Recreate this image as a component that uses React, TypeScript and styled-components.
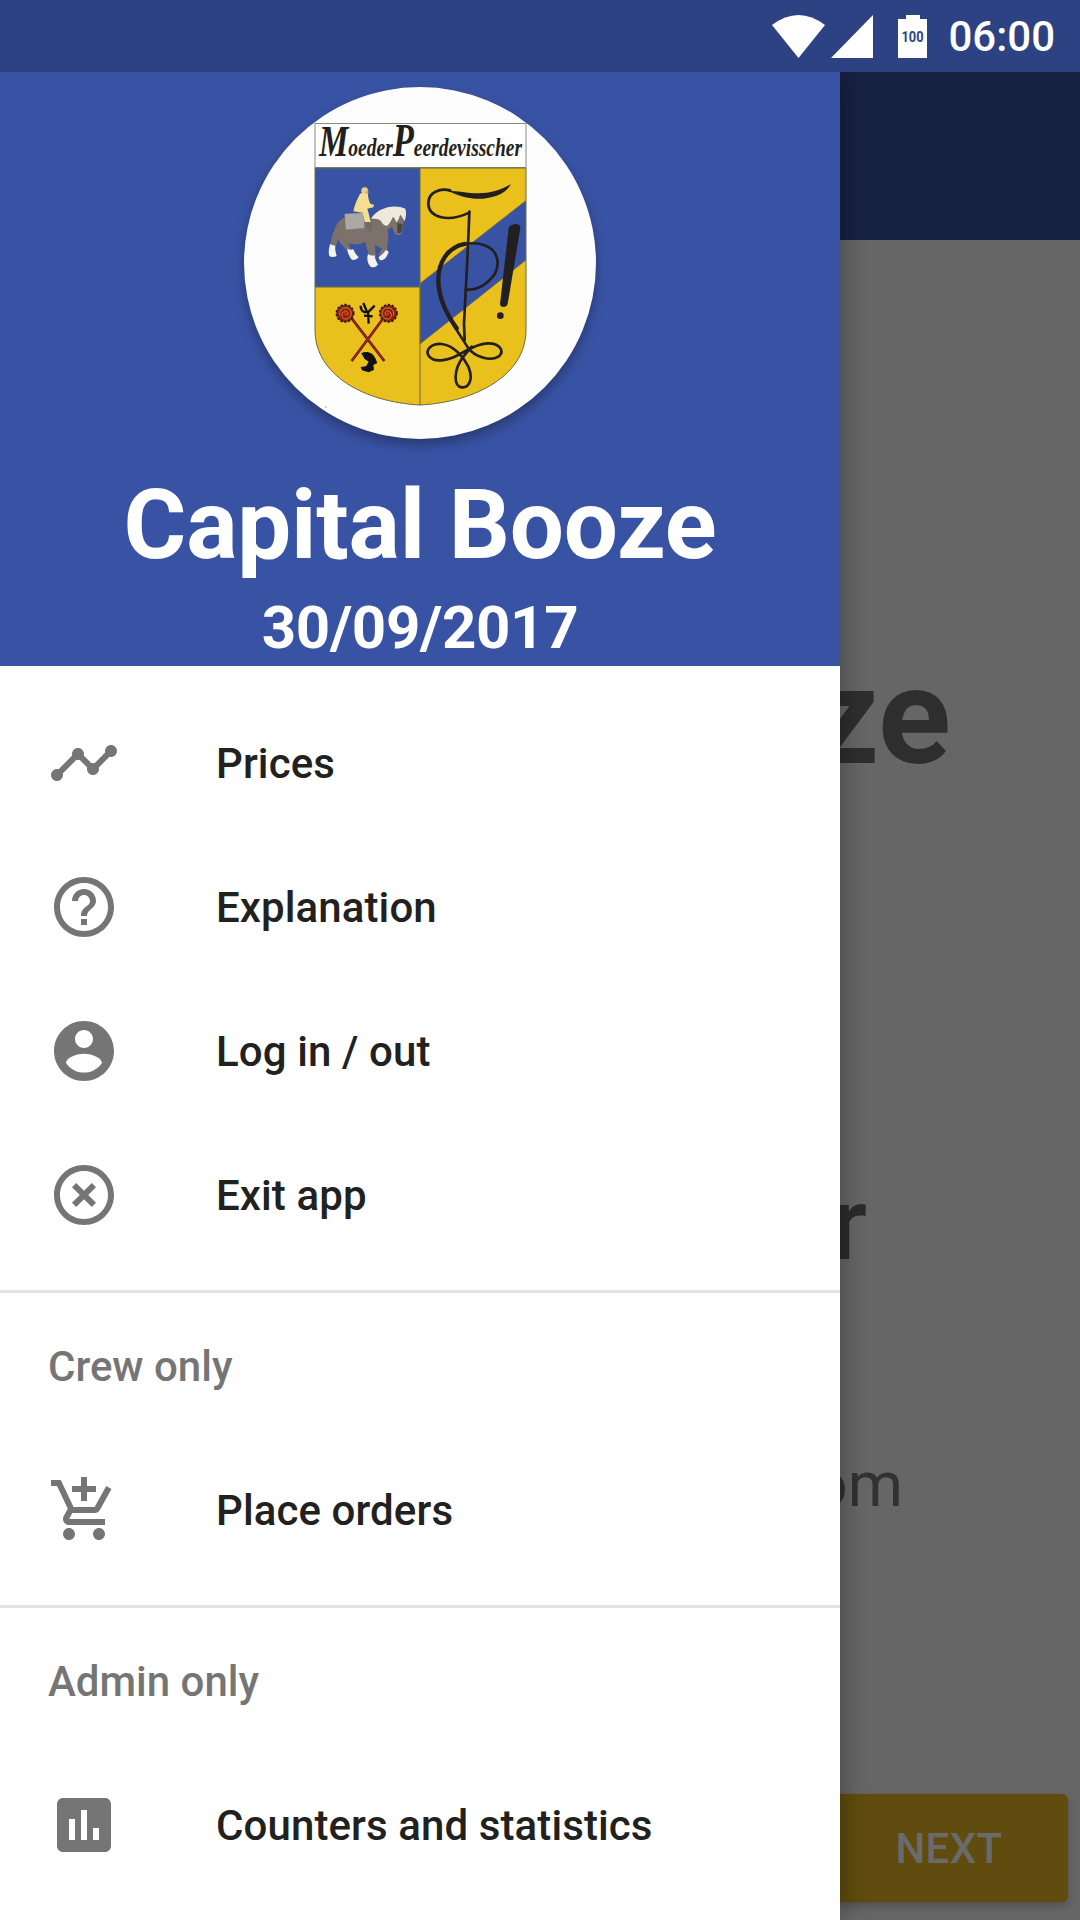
import React from 'react';
import styled, { createGlobalStyle } from 'styled-components';

const GlobalStyle = createGlobalStyle`
  html, body {
    margin: 0;
    padding: 0;
    background: #666666;
  }
  body {
    font-family: Roboto, "Liberation Sans", sans-serif;
    overflow: hidden;
  }
`;

const Screen = styled.div`
  width: 1080px;
  height: 1920px;
  display: flex;
  flex-direction: column;
  overflow: hidden;
`;

const StatusBar = styled.div`
  height: 72px;
  flex: none;
  display: flex;
  align-items: center;
  justify-content: flex-end;
  padding-right: 25px;
  background: #2d4282;
  position: relative;
  z-index: 3;
`;

const StatusIcon = styled.svg<{ $left: number }>`
  display: block;
  margin-left: ${(p) => p.$left}px;
  fill: #ffffff;
`;

const Clock = styled.span`
  margin-left: 21px;
  font-size: 42px;
  font-weight: 500;
  color: #ffffff;
`;

const Stage = styled.div`
  flex: 1;
  display: flex;
  min-height: 0;
`;

const Drawer = styled.nav`
  width: 840px;
  flex: none;
  background: #ffffff;
  box-shadow: 4px 0 22px rgba(0, 0, 0, 0.28);
  position: relative;
  z-index: 2;
`;

const DrawerHeader = styled.header`
  height: 594px;
  box-sizing: border-box;
  padding-top: 15px;
  display: flex;
  flex-direction: column;
  align-items: center;
  background: #3953a4;
  color: #ffffff;
  overflow: hidden;
`;

const Crest = styled.div`
  width: 352px;
  height: 352px;
  flex: none;
  border-radius: 50%;
  background: #fdfdfd;
  box-shadow: 0 6px 12px rgba(0, 0, 0, 0.3);
  svg {
    display: block;
  }
`;

const AppName = styled.h1`
  margin: 30px 0 0;
  font-size: 96px;
  line-height: 112px;
  font-weight: 700;
  letter-spacing: -0.2px;
`;

const EventDate = styled.div`
  margin-top: 12px;
  font-size: 60px;
  line-height: 70px;
  font-weight: 700;
  letter-spacing: -0.35px;
`;

const Section = styled.section<{ $divider?: boolean }>`
  padding: 1px 0 23px;
  border-bottom: ${(p) => (p.$divider ? '3px solid #e3e3e3' : 'none')};
`;

const FirstSection = styled(Section)`
  padding-top: 25px;
`;

const SectionLabel = styled.div`
  height: 144px;
  display: flex;
  align-items: center;
  padding-left: 48px;
  font-size: 42px;
  font-weight: 500;
  color: #757575;
`;

const Row = styled.div`
  height: 144px;
  display: flex;
  align-items: center;
  padding-left: 48px;
  font-size: 42px;
  font-weight: 500;
  letter-spacing: 0.1px;
  color: #212121;
`;

const RowIcon = styled.svg`
  width: 72px;
  height: 72px;
  flex: none;
  margin-right: 96px;
  fill: #757575;
`;

const Behind = styled.div`
  flex: 1;
  min-width: 0;
  display: flex;
  flex-direction: column;
  overflow: hidden;
`;

const Toolbar = styled.div`
  height: 168px;
  flex: none;
  background: #172142;
  box-shadow: 0 3px 8px rgba(0, 0, 0, 0.2);
`;

const BehindBody = styled.div`
  flex: 1;
  display: flex;
  flex-direction: column;
  background: #666666;
`;

const BehindLine = styled.div<{ $size: number; $weight: number; $top: number; $right: number; $color: string }>`
  display: flex;
  justify-content: flex-end;
  white-space: nowrap;
  margin-top: ${(p) => p.$top}px;
  padding-right: ${(p) => p.$right}px;
  font-size: ${(p) => p.$size}px;
  line-height: ${(p) => Math.round(p.$size * 1.18)}px;
  font-weight: ${(p) => p.$weight};
  color: ${(p) => p.$color};
`;

const NextButton = styled.div`
  margin: auto 12px 18px 0;
  height: 108px;
  box-sizing: border-box;
  padding-right: 10px;
  display: flex;
  align-items: center;
  justify-content: center;
  background: #5f4c0e;
  border-radius: 0 6px 6px 0;
  box-shadow: 0 4px 8px rgba(0, 0, 0, 0.22);
  font-size: 42px;
  font-weight: 500;
  letter-spacing: 0.4px;
  color: #6a6a6a;
`;

const BLUE = '#3953a4';
const GOLD = '#e9c01c';
const INK = '#231f20';

const CrestArt = () => (
  <svg width={352} height={352} viewBox="0 0 352 352">
    <defs>
      <clipPath id="shield">
        <path d="M71 81H282V243C282 288 232 315 176 318C120 315 71 288 71 243Z" />
      </clipPath>
    </defs>

    {/* motto banner */}
    <rect x={71} y={36.5} width={211} height={44} fill="#ffffff" stroke="#8a8a8a" strokeWidth={1} />
    <text
      transform="translate(75 69) scale(0.75 1)"
      fontFamily="'Liberation Serif', serif"
      fontStyle="italic"
      fontWeight={700}
      fontSize={26}
      fill={INK}
    >
      <tspan fontSize={44}>M</tspan>oeder<tspan fontSize={46}>P</tspan>eerdevisscher
    </text>

    {/* shield quarters */}
    <g clipPath="url(#shield)">
      <rect x={71} y={81} width={105} height={119} fill={BLUE} />
      <rect x={176} y={81} width={106} height={237} fill={GOLD} />
      <rect x={71} y={200} width={105} height={118} fill={GOLD} />
      <polygon points="176,196.5 282,113.5 282,173 176,257" fill={BLUE} stroke="#6d6a3e" strokeWidth={0.6} />
      <path d="M71 200H176M176 81V318" stroke="#6d6a3e" strokeWidth={1} fill="none" />
    </g>
    <path d="M71 81H282V243C282 288 232 315 176 318C120 315 71 288 71 243Z" fill="none" stroke="#6d6a3e" strokeWidth={1} />

    {/* rider and horse */}
    <g transform="translate(66 83) scale(0.3333)">
      <path
        d="M75 175C85 145 110 135 140 140C170 160 195 150 215 130L255 125L284 130L280 160L276 190C270 198 258 198 254 190L246 170L232 180C240 205 230 225 232 240L212 266L205 262L215 235L195 225L197 262L180 265L165 215C150 225 130 225 115 220L125 245L115 245C95 225 85 215 85 205L75 235L62 240C60 210 70 190 75 175Z"
        fill="#7d716b"
      />
      <path d="M60 222C66 226 72 226 76 228C74 238 78 250 80 258C72 262 64 262 58 258C54 245 58 232 60 222Z" fill="#f4f2ec" />
      <path d="M112 236C118 240 124 240 130 238C134 248 140 256 146 262C138 270 130 272 124 268C118 258 112 248 112 236Z" fill="#f4f2ec" />
      <path d="M174 252C180 256 188 258 194 256C194 266 200 276 204 284C196 292 188 294 182 290C172 282 170 264 174 252Z" fill="#f4f2ec" />
      <path d="M206 262C214 256 222 248 228 240C232 242 236 244 236 246C232 256 228 264 222 268C216 272 208 274 206 262Z" fill="#f4f2ec" />
      <path d="M183 146C200 116 250 100 286 116C290 128 288 142 284 154C278 144 274 136 270 134C268 146 262 156 258 156C256 148 252 142 248 142C244 152 238 164 230 168C222 166 216 160 212 152C206 146 194 146 183 146Z" fill="#efe9dc" />
      <path d="M262 160L278 162L274 188L262 190Z" fill="#4b4541" />
      <polygon points="104,132 160,128 163,174 108,179" fill="#aaa9a4" stroke="#8b8a84" strokeWidth={1} />
      <path d="M150 72C158 66 170 66 174 72C174 84 178 96 182 102L192 104L190 112L172 116C176 130 180 144 182 156L164 156L158 128L130 124C134 104 142 86 150 72Z" fill="#f3df8e" />
      <path d="M168 156L188 158L186 184L172 184Z" fill="#6f6a62" />
      <circle cx={164} cy={62} r={10} fill="#e9d28c" />
      <circle cx={171} cy={66} r={5} fill="#d9a58e" />
    </g>

    {/* crossed staffs */}
    <g transform="translate(76 198) scale(0.3333)" fill="none" strokeLinecap="butt">
      <path d="M95 228L190 100M193 228L95 100" stroke="#3a1a10" strokeWidth={8} />
      <path d="M95 228L190 100M193 228L95 100" stroke="#a8201a" strokeWidth={5} />
      <circle cx={75} cy={85} r={26} fill="#8f1d16" stroke="#231f20" strokeWidth={5} strokeDasharray="7 5" />
      <circle cx={205} cy={85} r={26} fill="#8f1d16" stroke="#231f20" strokeWidth={5} strokeDasharray="7 5" />
      <path d="M60 92C54 74 74 62 88 72C100 84 92 104 74 102C64 100 62 84 74 78C84 76 88 88 80 92" stroke={GOLD} strokeWidth={2} />
      <path d="M220 92C226 74 206 62 192 72C180 84 188 104 206 102C216 100 218 84 206 78C196 76 192 88 200 92" stroke={GOLD} strokeWidth={2} />
      <circle cx={76} cy={86} r={5} fill="#e01f26" />
      <circle cx={204} cy={86} r={5} fill="#e01f26" />
      <path d="M122 62C122 80 134 84 146 80L164 62M144 80L146 116M130 54L140 78M132 92L158 94" stroke="#111111" strokeWidth={7} />
      <path
        d="M124 205C140 196 160 204 166 220L172 234L160 240L162 254L146 262L126 256L122 246L138 244L146 230L134 222Z"
        fill="#111111"
        stroke="none"
      />
    </g>

    {/* monogram */}
    <g transform="translate(156 73) scale(0.3333)" fill="none" stroke={INK} strokeLinecap="round">
      <path
        d="M333 72C315 105 270 118 225 116C195 114 170 103 140 92C175 92 200 100 235 100C270 100 305 90 333 72Z"
        fill={INK}
        stroke="none"
      />
      <path d="M150 91C120 84 85 96 85 130C85 170 140 190 208 158" strokeWidth={8} />
      <path d="M208 155C205 250 198 380 192 490L194 540" strokeWidth={8} />
      <path
        d="M197 388C240 395 300 350 292 300C285 255 235 245 195 252C140 262 115 310 115 360C115 440 165 500 205 565C225 590 270 605 295 590C315 575 300 550 265 550C235 550 200 570 175 585C150 600 105 610 88 590C72 570 95 550 125 552C160 556 190 590 205 620C222 660 205 685 185 682C160 678 160 630 190 590L215 560"
        strokeWidth={8}
      />
      <path d="M195 252C140 262 115 310 115 360C115 420 145 470 170 505" strokeWidth={13} />
      <path d="M338 194C345 190 362 192 361 204L323 432C320 444 300 444 300 432L326 204C327 199 332 196 338 194Z" fill={INK} stroke="none" />
      <circle cx={301} cy={467} r={10} fill={INK} stroke="none" />
    </g>
    <circle cx={82} cy={320} r={0.6} fill="#333333" />
  </svg>
);

const ICONS = {
  timeline:
    'M23 8c0 1.1-.9 2-2 2-.18 0-.35-.02-.51-.07l-3.56 3.55c.05.16.07.34.07.52 0 1.1-.9 2-2 2s-2-.9-2-2c0-.18.02-.36.07-.52l-2.55-2.55c-.16.05-.34.07-.52.07s-.36-.02-.52-.07l-4.55 4.56c.05.16.07.33.07.51 0 1.1-.9 2-2 2s-2-.9-2-2 .9-2 2-2c.18 0 .35.02.51.07l4.56-4.55C8.02 9.36 8 9.18 8 9c0-1.1.9-2 2-2s2 .9 2 2c0 .18-.02.36-.07.52l2.55 2.55c.16-.05.34-.07.52-.07s.36.02.52.07l3.55-3.56C19.02 8.35 19 8.18 19 8c0-1.1.9-2 2-2s2 .9 2 2z',
  help: 'M11 18h2v-2h-2v2zm1-16C6.48 2 2 6.48 2 12s4.48 10 10 10 10-4.48 10-10S17.52 2 12 2zm0 18c-4.41 0-8-3.59-8-8s3.59-8 8-8 8 3.59 8 8-3.59 8-8 8zm0-14c-2.21 0-4 1.79-4 4h2c0-1.1.9-2 2-2s2 .9 2 2c0 2-3 1.75-3 5h2c0-2.25 3-2.5 3-5 0-2.21-1.79-4-4-4z',
  account:
    'M12 2C6.48 2 2 6.48 2 12s4.48 10 10 10 10-4.48 10-10S17.52 2 12 2zm0 3c1.66 0 3 1.34 3 3s-1.34 3-3 3-3-1.34-3-3 1.34-3 3-3zm0 14.2c-2.5 0-4.71-1.28-6-3.22.03-1.99 4-3.08 6-3.08 1.99 0 5.97 1.09 6 3.08-1.29 1.94-3.5 3.22-6 3.22z',
  exit: 'M14.59 8L12 10.59 9.41 8 8 9.41 10.59 12 8 14.59 9.41 16 12 13.41 14.59 16 16 14.59 13.41 12 16 9.41 14.59 8zM12 2C6.47 2 2 6.47 2 12s4.47 10 10 10 10-4.47 10-10S17.53 2 12 2zm0 18c-4.41 0-8-3.59-8-8s3.59-8 8-8 8 3.59 8 8-3.59 8-8 8z',
  cart: 'M11 9h2V6h3V4h-3V1h-2v3H8v2h3v3zm-4 9c-1.1 0-1.99.9-1.99 2S5.9 22 7 22s2-.9 2-2-.9-2-2-2zm10 0c-1.1 0-1.99.9-1.99 2s.89 2 1.99 2 2-.9 2-2-.9-2-2-2zm-9.83-3.25l.03-.12.9-1.63h7.45c.75 0 1.41-.41 1.75-1.03l3.86-7.01L19.42 4h-.01l-1.1 2-2.76 5H8.53l-.13-.27L6.16 6l-.95-2-.94-2H1v2h2l3.6 7.59-1.35 2.45c-.16.28-.25.61-.25.96 0 1.1.9 2 2 2h12v-2H7.42c-.13 0-.25-.11-.25-.25z',
  stats:
    'M19 3H5c-1.1 0-2 .9-2 2v14c0 1.1.9 2 2 2h14c1.1 0 2-.9 2-2V5c0-1.1-.9-2-2-2zM9 17H7v-7h2v7zm4 0h-2V7h2v10zm4 0h-2v-4h2v4z',
};

const MenuRow = ({ icon, label }: { icon: keyof typeof ICONS; label: string }) => (
  <Row>
    <RowIcon viewBox="0 0 24 24">
      <path d={ICONS[icon]} />
    </RowIcon>
    {label}
  </Row>
);

export default function App() {
  return (
    <Screen>
      <GlobalStyle />
      <StatusBar>
        <StatusIcon $left={0} width={53} height={43} viewBox="0 0 53 43">
          <path d="M26.5 43L0 10Q26.5 -10 53 10Z" />
        </StatusIcon>
        <StatusIcon $left={6} width={42} height={43} viewBox="0 0 42 43">
          <path d="M42 0V43H0Z" />
        </StatusIcon>
        <StatusIcon $left={25} width={29} height={43} viewBox="0 0 29 43">
          <path d="M8 0H22V4H29V43H0V4H8Z" />
          <text
            x={3.5}
            y={27}
            textLength={22}
            lengthAdjust="spacingAndGlyphs"
            fontFamily="Roboto, sans-serif"
            fontWeight={700}
            fontSize={14}
            fill="#2d4282"
          >
            100
          </text>
        </StatusIcon>
        <Clock>06:00</Clock>
      </StatusBar>
      <Stage>
        <Drawer>
          <DrawerHeader>
            <Crest>
              <CrestArt />
            </Crest>
            <AppName>Capital Booze</AppName>
            <EventDate>30/09/2017</EventDate>
          </DrawerHeader>
          <FirstSection $divider>
            <MenuRow icon="timeline" label="Prices" />
            <MenuRow icon="help" label="Explanation" />
            <MenuRow icon="account" label="Log in / out" />
            <MenuRow icon="exit" label="Exit app" />
          </FirstSection>
          <Section $divider>
            <SectionLabel>Crew only</SectionLabel>
            <MenuRow icon="cart" label="Place orders" />
          </Section>
          <Section>
            <SectionLabel>Admin only</SectionLabel>
            <MenuRow icon="stats" label="Counters and statistics" />
          </Section>
        </Drawer>
        <Behind>
          <Toolbar />
          <BehindBody>
            <BehindLine $size={135} $weight={700} $top={398} $right={129} $color="#2e2e2e">
              ze
            </BehindLine>
            <BehindLine $size={102} $weight={500} $top={367} $right={213} $color="#2b2b2b">
              r
            </BehindLine>
            <BehindLine $size={63} $weight={400} $top={164} $right={177} $color="#323232">
              om
            </BehindLine>
            <NextButton>NEXT</NextButton>
          </BehindBody>
        </Behind>
      </Stage>
    </Screen>
  );
}
